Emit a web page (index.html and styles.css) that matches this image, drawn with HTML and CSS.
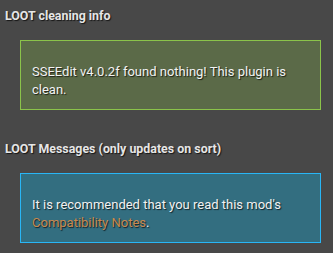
FILE: index.html
```html
<!DOCTYPE html>
<html>
<head>
<meta charset="utf-8">
<link rel="stylesheet" href="styles.css">
</head>
<body>
<section class="section">
  <h2 class="heading">LOOT cleaning info</h2>
  <div class="box box-green">
    <p class="msg">SSEEdit v4.0.2f found nothing! This plugin is clean.</p>
  </div>
</section>
<section class="section section-next">
  <h2 class="heading">LOOT Messages (only updates on sort)</h2>
  <div class="box box-blue">
    <p class="msg">It is recommended that you read this mod's <a class="link" href="#">Compatibility Notes</a>.</p>
  </div>
</section>
</body>
</html>
```
FILE: styles.css
```css
html, body {
  margin: 0;
  padding: 0;
  background: #484848;
  width: 333px;
  height: 253px;
  overflow: hidden;
}
body {
  font-family: Roboto, "Liberation Sans", sans-serif;
  color: #f2f2f2;
  text-shadow: 1px 1px 1px rgba(0,0,0,0.7);
}
.section {
  padding-top: 8px;
}
.section-next {
  padding-top: 31px;
}
.heading {
  margin: 0 0 0 5px;
  font-size: 12.4px;
  font-weight: bold;
  line-height: 16px;
  color: #e6e6e6;
}
.box {
  box-sizing: border-box;
  margin: 16px 0 0 20px;
  width: 301px;
  height: 70px;
  padding: 22px 11px 0 11px;
}
.box-green {
  background: #5b6a48;
  border: 1px solid #8bc34a;
}
.box-blue {
  background: #336e80;
  border: 1px solid #29b6f6;
}
.msg {
  margin: 0;
  font-size: 13px;
  line-height: 18px;
}
.link {
  color: #c8894e;
  text-decoration: none;
}
```
